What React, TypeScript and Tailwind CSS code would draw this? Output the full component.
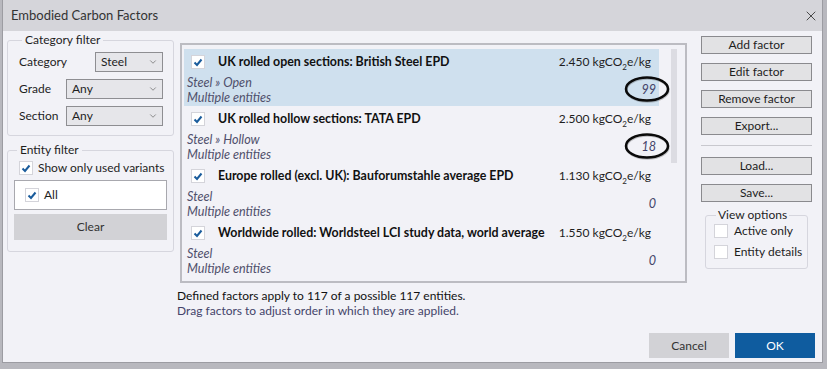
import { ChevronDown, X } from 'lucide-react'

const font = { fontFamily: 'Lato, "Noto Sans", sans-serif' }

const Check = ({ checked = true }: { checked?: boolean }) => (
  <div className="w-[14px] h-[14px] bg-white border border-[#d4d4da] flex items-center justify-center shrink-0">
    {checked && (
      <svg width="10" height="10" viewBox="0 0 10 10">
        <path d="M1.5 5.5 L4 8 L8.5 2.5" fill="none" stroke="#1a5c9c" strokeWidth="2" />
      </svg>
    )}
  </div>
)

const Select = ({ value, className }: { value: string; className: string }) => (
  <div className={`h-[20px] border border-[#8e8e92] bg-[#e6e6ea] flex items-center justify-between pl-[5px] pr-[4px] text-[12px] text-[#1e1e1e] ${className}`}>
    <span>{value}</span>
    <ChevronDown size={10} strokeWidth={1.5} className="text-[#555]" />
  </div>
)

const Btn = ({ label }: { label: string }) => (
  <div className="h-[18px] border border-[#8a8a8e] bg-[#e2e2e4] flex items-center justify-center text-[12px] text-[#1e1e1e]">{label}</div>
)

const items = [
  { title: 'UK rolled open sections: British Steel EPD', value: '2.450', path: 'Steel » Open', count: '99', sel: true, ring: true },
  { title: 'UK rolled hollow sections: TATA EPD', value: '2.500', path: 'Steel » Hollow', count: '18', sel: false, ring: true },
  { title: 'Europe rolled (excl. UK): Bauforumstahle average EPD', value: '1.130', path: 'Steel', count: '0', sel: false, ring: false },
  { title: 'Worldwide rolled: Worldsteel LCI study data, world average', value: '1.550', path: 'Steel', count: '0', sel: false, ring: false },
]

export default function App() {
  return (
    <div className="w-[827px] h-[369px] flex flex-col bg-[#b8b8be] pl-[2px] pr-[4px] pb-[6px] overflow-hidden" style={font}>
      {/* Title bar */}
      <div className="h-[31px] shrink-0 bg-[#d5d5da] flex items-center justify-between pl-[8px] pr-[3px] border-l border-r border-[#9c9ca2]">
        <span className="text-[13px] text-[#333]">Embodied Carbon Factors</span>
        <X size={16} strokeWidth={1.3} className="text-[#333]" />
      </div>

      <div className="flex-1 bg-[#f2f2f7] flex flex-col border-l border-r border-b border-[#9c9ca2] pl-[4px] pr-[6px] pb-[4px]">
        <div className="flex">
          {/* Left column */}
          <div className="w-[167px] flex flex-col">
            <fieldset className="border border-[#d6d6de] rounded-[3px] pl-[11px] pr-[10px] pb-[9px] pt-[3px]">
              <legend className="ml-[3px] px-[3px] text-[12px] text-[#1e1e1e] leading-[18px]">Category filter</legend>
              <div className="flex items-center h-[20px]">
                <span className="text-[12px] text-[#1e1e1e] w-[76px]">Category</span>
                <Select value="Steel" className="w-[68px]" />
              </div>
              <div className="flex items-center h-[20px] mt-[7px]">
                <span className="text-[12px] text-[#1e1e1e] w-[47px]">Grade</span>
                <Select value="Any" className="w-[97px]" />
              </div>
              <div className="flex items-center h-[20px] mt-[7px]">
                <span className="text-[12px] text-[#1e1e1e] w-[47px]">Section</span>
                <Select value="Any" className="w-[97px]" />
              </div>
            </fieldset>

            <fieldset className="mt-[5px] border border-[#d6d6de] rounded-[3px] px-[6px] pb-[11px] pt-[1px]">
              <legend className="ml-[3px] px-[3px] text-[12px] text-[#1e1e1e] leading-[18px]">Entity filter</legend>
              <div className="flex items-center gap-[5px] pl-[5px] h-[16px]">
                <Check />
                <span className="text-[12px] text-[#1e1e1e]">Show only used variants</span>
              </div>
              <div className="mt-[4px] h-[30px] bg-white border border-[#a8a8ae] flex items-center gap-[5px] pl-[10px]">
                <Check />
                <span className="text-[12px] text-[#1e1e1e]">All</span>
              </div>
              <div className="mt-[4px] h-[26px] bg-[#d2d2d6] flex items-center justify-center text-[12px] text-[#333]">Clear</div>
            </fieldset>
          </div>

          {/* Middle column */}
          <div className="ml-[3px] w-[510px] flex flex-col pt-[12px]">
            <div className="ml-[3px] w-[507px] h-[240px] border-2 border-[#bcbcc2] bg-[#f2f2f7] flex pl-[2px] pt-[4px]">
              <div className="w-[475px] flex flex-col">
                {items.map((it) => (
                  <div key={it.title} className={`relative h-[57px] ${it.sel ? 'bg-[#cfe0ee]' : ''}`}>
                    <div className="flex items-center pt-[6px] h-[20px]">
                      <div className="ml-[7px]"><Check /></div>
                      <span className="ml-[13px] flex-1 text-[12.4px] font-bold text-[#111] whitespace-nowrap">{it.title}</span>
                      <span className="pr-[8px] text-[12px] text-[#1e1e1e] whitespace-nowrap">
                        {it.value} kgCO<sub className="text-[8px] align-[-2px]">2</sub>e/kg
                      </span>
                    </div>
                    <div className="flex items-center mt-[6px] pl-[3px] pr-[3px]">
                      <div className="flex-1 flex flex-col text-[12.6px] italic text-[#50506c] leading-[15px]">
                        <span>{it.path}</span>
                        <span>Multiple entities</span>
                      </div>
                      <span className="text-[12.6px] italic text-[#44446a]">{it.count}</span>
                    </div>
                    {it.ring && (
                      <svg className="absolute left-[439px] top-[26px]" width="48" height="30" viewBox="0 0 48 30">
                        <ellipse cx="24.5" cy="15" rx="21" ry="11.5" fill="none" stroke="#222" strokeWidth="2.5" opacity="0.25" />
                        <ellipse cx="24" cy="14" rx="21" ry="11.5" fill="none" stroke="#0a0a0a" strokeWidth="2.5" />
                      </svg>
                    )}
                  </div>
                ))}
              </div>
              <div className="ml-[12px] w-[6px] h-[114px] bg-[#dcdce2]" />
            </div>
            <div className="mt-[5px] text-[12px] leading-[15px]">
              <div className="text-[#111]">Defined factors apply to 117 of a possible 117 entities.</div>
              <div className="text-[#44446a]">Drag factors to adjust order in which they are applied.</div>
            </div>
          </div>

          {/* Right column */}
          <div className="ml-[14px] w-[111px] flex flex-col pt-[5px]">
            <div className="flex flex-col gap-[9px]">
              <Btn label="Add factor" />
              <Btn label="Edit factor" />
              <Btn label="Remove factor" />
              <Btn label="Export..." />
            </div>
            <div className="mt-[10px] h-px bg-[#c8c8ce]" />
            <div className="mt-[11px] flex flex-col gap-[9px]">
              <Btn label="Load..." />
              <Btn label="Save..." />
            </div>
            <fieldset className="mt-[4px] mx-[4px] border border-[#d6d6de] rounded-[3px] pl-[8px] pb-[9px] pt-0">
              <legend className="ml-[2px] px-[2px] text-[12px] text-[#1e1e1e] leading-[18px]">View options</legend>
              <div className="flex items-center gap-[6px] h-[14px]">
                <Check checked={false} />
                <span className="text-[12px] text-[#1e1e1e]">Active only</span>
              </div>
              <div className="flex items-center gap-[6px] h-[14px] mt-[7px]">
                <Check checked={false} />
                <span className="text-[12px] text-[#1e1e1e]">Entity details</span>
              </div>
            </fieldset>
          </div>
        </div>

        <div className="flex-1" />
        <div className="flex justify-end gap-[6px] pr-[1px]">
          <div className="w-[80px] h-[25px] bg-[#d2d2d6] flex items-center justify-center text-[12px] text-[#333]">Cancel</div>
          <div className="w-[80px] h-[25px] bg-[#0f5c9f] flex items-center justify-center text-[12px] text-white">OK</div>
        </div>
      </div>
    </div>
  )
}
